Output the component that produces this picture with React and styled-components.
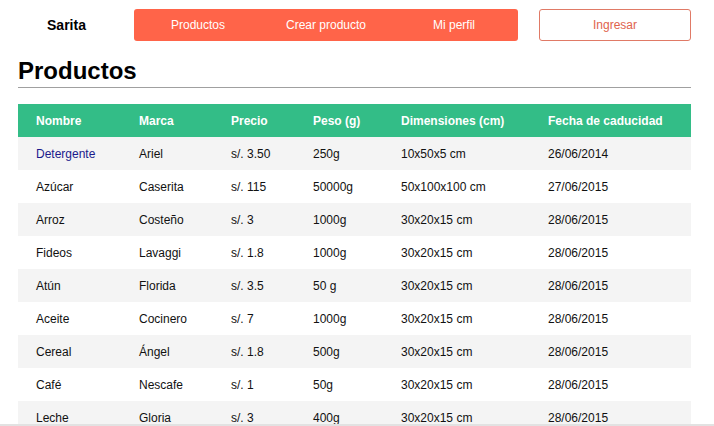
import React from 'react';
import styled, { createGlobalStyle } from 'styled-components';

const products = [
    { nombre: 'Detergente', marca: 'Ariel', precio: 's/. 3.50', peso: '250g', dim: '10x50x5 cm', fecha: '26/06/2014', link: true },
    { nombre: 'Azúcar', marca: 'Caserita', precio: 's/. 115', peso: '50000g', dim: '50x100x100 cm', fecha: '27/06/2015' },
    { nombre: 'Arroz', marca: 'Costeño', precio: 's/. 3', peso: '1000g', dim: '30x20x15 cm', fecha: '28/06/2015' },
    { nombre: 'Fideos', marca: 'Lavaggi', precio: 's/. 1.8', peso: '1000g', dim: '30x20x15 cm', fecha: '28/06/2015' },
    { nombre: 'Atún', marca: 'Florida', precio: 's/. 3.5', peso: '50 g', dim: '30x20x15 cm', fecha: '28/06/2015' },
    { nombre: 'Aceite', marca: 'Cocinero', precio: 's/. 7', peso: '1000g', dim: '30x20x15 cm', fecha: '28/06/2015' },
    { nombre: 'Cereal', marca: 'Ángel', precio: 's/. 1.8', peso: '500g', dim: '30x20x15 cm', fecha: '28/06/2015' },
    { nombre: 'Café', marca: 'Nescafe', precio: 's/. 1', peso: '50g', dim: '30x20x15 cm', fecha: '28/06/2015' },
    { nombre: 'Leche', marca: 'Gloria', precio: 's/. 3', peso: '400g', dim: '30x20x15 cm', fecha: '28/06/2015' },
];

const columns = [
    { label: 'Nombre', width: 103 },
    { label: 'Marca', width: 92 },
    { label: 'Precio', width: 82 },
    { label: 'Peso (g)', width: 88 },
    { label: 'Dimensiones (cm)', width: 147 },
    { label: 'Fecha de caducidad', width: 161 },
];

const App = () => {
    return (
        <>
            <GlobalStyle />
            <Page>
                <Header>
                    <Brand>Sarita</Brand>
                    <Nav>
                        {['Productos', 'Crear producto', 'Mi perfil'].map((item) => (
                            <NavItem key={item}>{item}</NavItem>
                        ))}
                    </Nav>
                    <LoginButton>Ingresar</LoginButton>
                </Header>
                <Title>Productos</Title>
                <Table>
                    <colgroup>
                        {columns.map((col) => (
                            <col key={col.label} style={{ width: col.width }} />
                        ))}
                    </colgroup>
                    <thead>
                        <tr>
                            {columns.map((col) => (
                                <Th key={col.label}>{col.label}</Th>
                            ))}
                        </tr>
                    </thead>
                    <tbody>
                        {products.map((p, index) => (
                            <Row key={`product-${index}`} $striped={index % 2 === 0}>
                                <Td $link={p.link}>{p.nombre}</Td>
                                <Td>{p.marca}</Td>
                                <Td>{p.precio}</Td>
                                <Td>{p.peso}</Td>
                                <Td>{p.dim}</Td>
                                <Td>{p.fecha}</Td>
                            </Row>
                        ))}
                    </tbody>
                </Table>
            </Page>
            <BottomEdge />
        </>
    );
};

const GlobalStyle = createGlobalStyle`
    html, body {
        margin: 0;
        padding: 0;
        background: #fff;
        font-family: "Liberation Sans", Arial, sans-serif;
        overflow: hidden;
    }
`;
const Page = styled.div`
    width: 673px;
    padding: 9px 23px 0 18px;
`;
const Header = styled.div`
    display: flex;
    align-items: center;
    height: 32px;
`;
const Brand = styled.div`
    width: 97px;
    margin-right: 19px;
    text-align: center;
    font-size: 14px;
    font-weight: bold;
    color: #000;
`;
const Nav = styled.div`
    display: grid;
    grid-template-columns: repeat(3, 1fr);
    width: 384px;
    height: 32px;
    background-color: #ff6449;
    border-radius: 3px;
`;
const NavItem = styled.div`
    display: flex;
    align-items: center;
    justify-content: center;
    color: #fff;
    font-size: 12px;
`;
const LoginButton = styled.div`
    display: flex;
    align-items: center;
    justify-content: center;
    margin-left: 21px;
    width: 150px;
    height: 30px;
    border: 1px solid #e07a66;
    border-radius: 3px;
    color: #e0634d;
    font-size: 12px;
`;
const Title = styled.h1`
    margin: 17px 0 0;
    padding-bottom: 3px;
    border-bottom: 1px solid #a0a0a0;
    font-size: 24px;
    line-height: 26px;
    font-weight: bold;
    color: #000;
`;
const Table = styled.table`
    margin-top: 16px;
    width: 673px;
    border-collapse: collapse;
    table-layout: fixed;
    font-size: 12px;
`;
const Th = styled.th`
    height: 33px;
    padding: 0 0 0 18px;
    background-color: #33bd87;
    color: #fff;
    font-weight: bold;
    text-align: left;
`;
const Row = styled.tr`
    background-color: ${({ $striped }) => ($striped ? '#f4f4f4' : '#fff')};
`;
const Td = styled.td`
    height: 33px;
    padding: 0 0 0 18px;
    color: ${({ $link }) => ($link ? '#1a1a8c' : '#111')};
    white-space: nowrap;
`;
const BottomEdge = styled.div`
    position: fixed;
    left: 0;
    right: 0;
    bottom: 0;
    height: 2px;
    background-color: #e2e2e2;
`;

export default App;
